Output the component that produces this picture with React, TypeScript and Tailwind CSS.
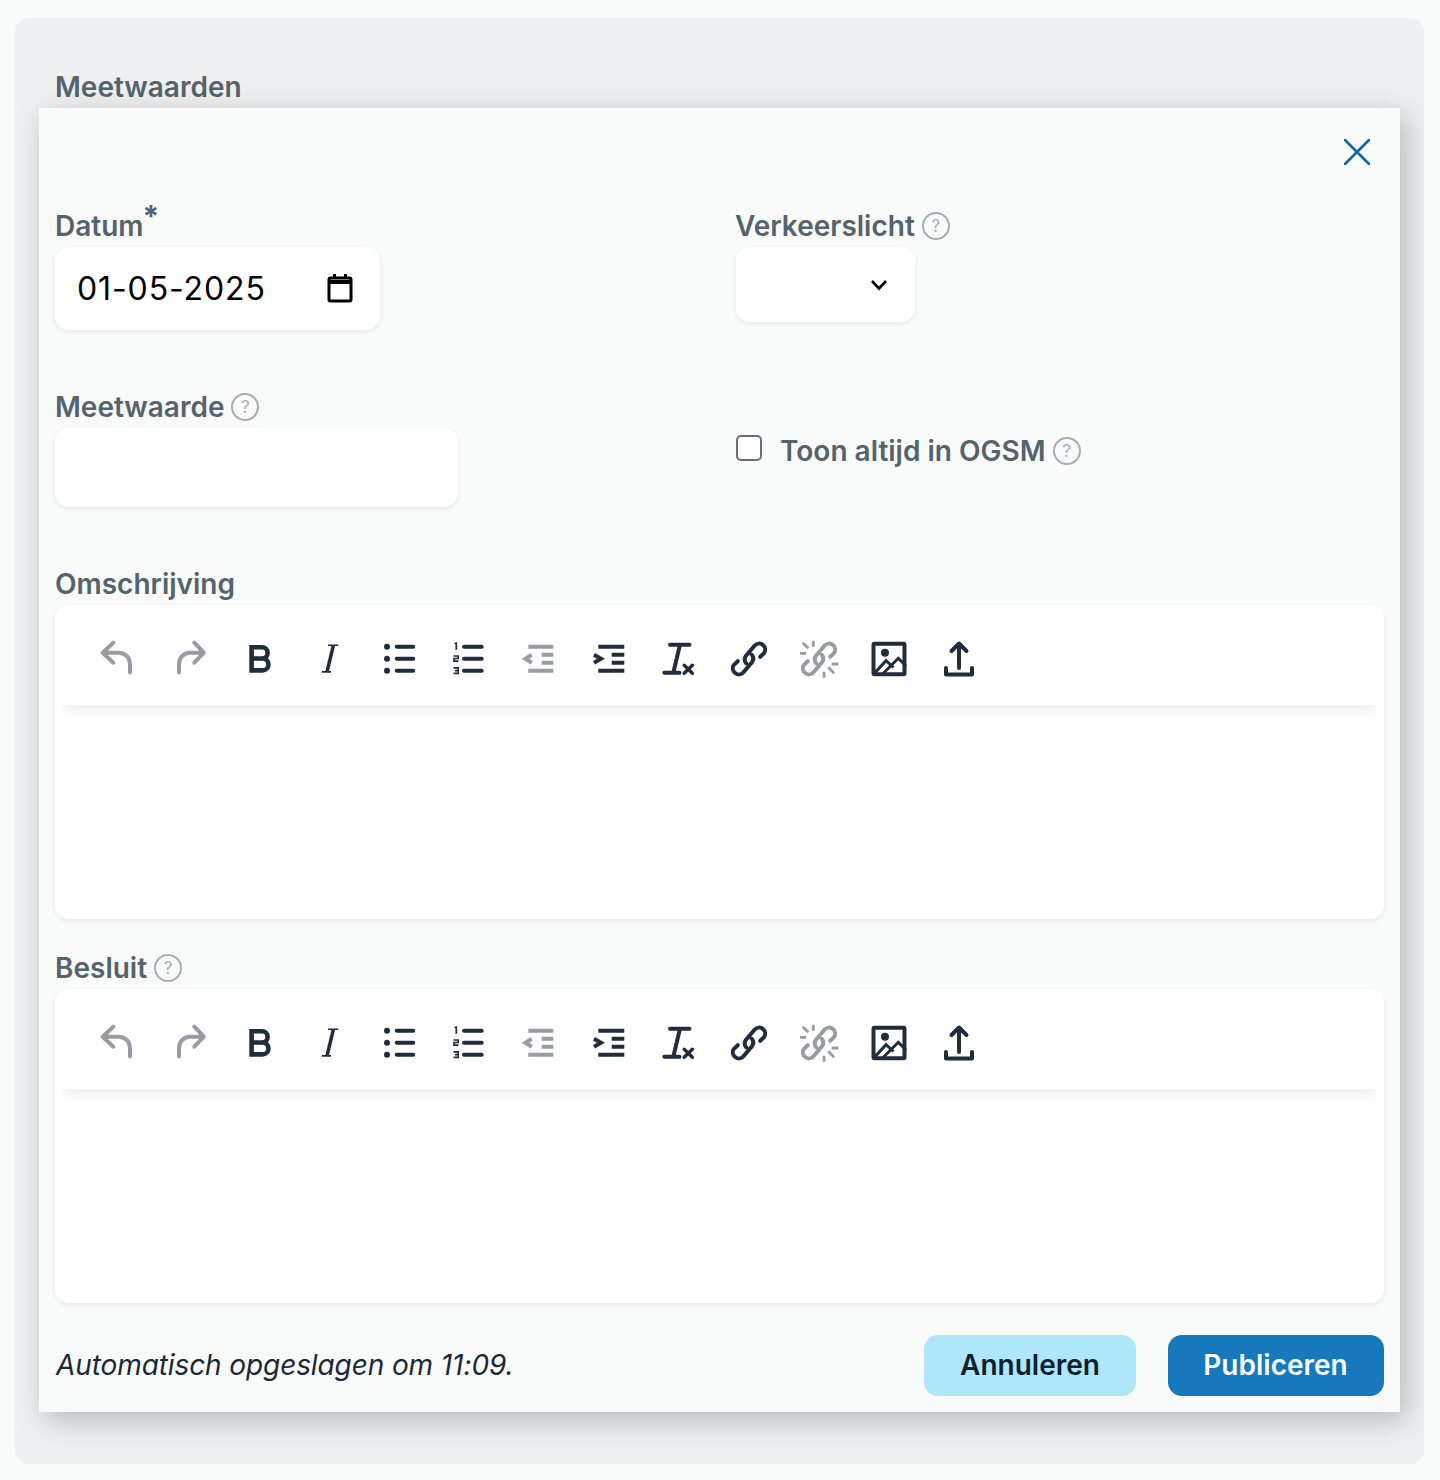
const LINK = 'M-2.8 4.2 C-5 1.5 -4.5 -1.2 -3 -3.2 L5.5 -13.2 A6 6 0 0 1 14.8 -5.6 L11.2 -2.2 M2.8 -4.2 C5 -1.5 4.5 1.2 3 3.2 L-5.5 13.2 A6 6 0 0 1 -14.8 5.6 L-11.2 2.2';

// coordinates are px from the centre of each toolbar button
const TOOLS: { key: string; off?: boolean; draw: React.ReactNode }[] = [
  {
    key: 'undo',
    off: true,
    draw: <path d="M-5.7 -16.3 L-16.3 -6.3 L-5.7 3.7 M-16 -6.3 H-1 C6.5 -6.3 11 -1 11 5 V13.5" />,
  },
  {
    key: 'redo',
    off: true,
    draw: <path d="M5.3 -16.3 L14.8 -6.3 L5.3 3.7 M14 -6.3 H1 C-5.5 -6.3 -10 -1 -10 5 V13.5" />,
  },
  {
    key: 'bold',
    draw: <path strokeWidth="4.6" strokeLinecap="butt" strokeLinejoin="miter" d="M-7.4 -0.5 V-11.7 H3 A5.6 5.6 0 0 1 3 -0.5 H-7.4 V11.4 H3.5 A5.95 5.95 0 0 0 3.5 -0.5" />,
  },
  {
    key: 'italic',
    draw: (
      <>
        <path strokeWidth="1.6" strokeLinecap="butt" d="M-1 -13.8 H9.3 M-7.3 12.9 H2" />
        <path stroke="none" fill="currentColor" d="M2.6 -13.8 H6.2 L-0.2 12.9 H-3.8 Z" />
      </>
    ),
  },
  {
    key: 'ul',
    draw: (
      <>
        <path d="M-2.3 -12.3 H14.3 M-2.3 -0.3 H14.3 M-2.3 11.7 H14.3" />
        <circle cx="-12" cy="-12.3" r="3" fill="currentColor" stroke="none" />
        <circle cx="-12" cy="-0.3" r="3" fill="currentColor" stroke="none" />
        <circle cx="-12" cy="11.7" r="3" fill="currentColor" stroke="none" />
      </>
    ),
  },
  {
    key: 'ol',
    draw: (
      <>
        <path d="M-5 -12.3 H12.7 M-5 -0.3 H12.7 M-5 11.7 H12.7" />
        <path strokeWidth="1.7" strokeLinecap="butt" strokeLinejoin="miter" d="M-14.5 -15.5 L-12.7 -16 V-9.3 M-15.5 -3 H-10.8 V-0.5 H-15 V2.2 H-10.5 M-15.5 8.8 H-10.8 V14.3 H-15.5 M-14 11.6 H-10.8" />
      </>
    ),
  },
  {
    key: 'outdent',
    off: true,
    draw: <path strokeLinecap="butt" strokeLinejoin="miter" d="M-10.7 -12.3 H14.3 M-10.7 11.7 H14.3 M2.7 -4.3 H14.3 M2.7 3.7 H14.3 M-7.3 -4.3 L-13.5 -0.3 L-7.3 3.7" />,
  },
  {
    key: 'indent',
    draw: <path strokeLinecap="butt" strokeLinejoin="miter" d="M-10.7 -12.3 H15.3 M-10.7 11.7 H15.3 M2.7 -4.3 H15.3 M2.7 3.7 H15.3 M-15 -4.3 L-8 -0.3 L-15 3.7" />,
  },
  {
    key: 'clear',
    draw: (
      <>
        <path d="M-9 -14.3 H10.5 M1 -14.3 L-5.7 13.7 M-14.7 13.7 H0.5" />
        <path strokeWidth="3.4" d="M5.2 6.2 L13.4 14.2 M13.4 6.2 L5.2 14.2" />
      </>
    ),
  },
  {
    key: 'link',
    draw: <path d={LINK} />,
  },
  {
    key: 'unlink',
    off: true,
    draw: (
      <>
        <path d={LINK} />
        <path strokeWidth="2.8" strokeLinecap="butt" d="M-16.3 -16.3 L-10.7 -10.7 M-5.7 -18.3 V-12.3 M-19 -5.7 H-13 M19.3 5 H12.7 M9.3 8.3 L15 14.3 M5 12.7 V18.7" />
      </>
    ),
  },
  {
    key: 'image',
    draw: (
      <>
        <rect x="-15.5" y="-15.3" width="31" height="30.5" rx="1" />
        <circle cx="-4" cy="-6.3" r="4" fill="currentColor" stroke="none" />
        <path strokeWidth="3" strokeLinecap="butt" strokeLinejoin="miter" d="M-14 13.7 L-3 1.7 L4.5 8.5 M-5.7 14.3 L9.3 -0.7 L17 7" />
      </>
    ),
  },
  {
    key: 'upload',
    draw: <path d="M-13 9 V15.5 H13 V9 M0 -15 V9 M-7.5 -8 L0 -15.5 L7.5 -8" />,
  },
];

function Help() {
  return (
    <span className="ml-[7px] inline-flex w-[28px] h-[28px] rounded-full border-2 border-[#a3afb5] items-center justify-center text-[17px] leading-none font-normal text-[#a3afb5]">
      ?
    </span>
  );
}

function Label({ children }: { children: React.ReactNode }) {
  return (
    <div className="flex items-center h-[42px] text-[28px] leading-[42px] font-semibold text-[#55636d]">
      {children}
    </div>
  );
}

function Editor() {
  return (
    <div className="h-[314px] rounded-[14px] bg-white shadow-[0_2px_5px_rgba(0,0,0,0.08)]">
      <div className="mx-2 h-[100px] pt-[34px] pl-[21px] flex bg-white shadow-[0_5px_14px_rgba(0,0,0,0.08)] [clip-path:inset(0_0_-24px_0)]">
        {TOOLS.map((t) => (
          <button key={t.key} className={`w-[70px] h-[40px] flex items-center justify-center ${t.off ? 'text-[#989ca3]' : 'text-[#1f2d3d]'}`}>
            <svg width="40" height="40" viewBox="-20 -20 40 40" overflow="visible" fill="none" stroke="currentColor" strokeWidth="4" strokeLinecap="round" strokeLinejoin="round">
              {t.draw}
            </svg>
          </button>
        ))}
      </div>
    </div>
  );
}

export default function App() {
  return (
    <div className="min-h-[1480px] bg-[#f9fbfb] pt-[18px] pl-[15px] font-['Inter',sans-serif]">
      <div className="w-[1409px] h-[1446px] rounded-[14px] bg-[#eff0f2] pt-[48px] px-[24px] overflow-hidden">
        <h2 className="pl-[16px] h-[42px] text-[28px] leading-[42px] font-semibold text-[#55636d]">Meetwaarden</h2>

        <div className="relative bg-[#f9fbfb] px-[16px] pt-[97px] pb-[16px] shadow-[6px_8px_28px_rgba(0,0,0,0.24)]">
          <button className="absolute top-[31px] right-[30px] text-[#15669a]">
            <svg width="26" height="26" viewBox="0 0 26 26" fill="none" stroke="currentColor" strokeWidth="2.6" strokeLinecap="round">
              <path d="M1 1 L25 25 M25 1 L1 25" />
            </svg>
          </button>

          <div className="grid grid-cols-2 gap-x-[33px]">
            <div>
              <Label>
                Datum
                <span className="self-start -mt-[10px] -ml-[1px] text-[30px] leading-[42px] font-bold">*</span>
              </Label>
              <div className="w-[325px] h-[83px] rounded-[14px] bg-white shadow-[0_2px_5px_rgba(0,0,0,0.08)] flex items-center pl-[22px] pr-[27px] justify-between">
                <span className="text-[32px] tracking-[0.9px] text-black">01-05-2025</span>
                <svg width="26" height="30" viewBox="0 0 26 30" fill="none" className="text-black -mt-[2px]">
                  <rect x="2" y="5" width="22" height="23" rx="1.5" stroke="currentColor" strokeWidth="3" />
                  <path d="M2 7 H24 V11 H2 Z M6 1 H9 V6 H6 Z M17 1 H20 V6 H17 Z" fill="currentColor" />
                </svg>
              </div>
            </div>
            <div>
              <div className="-ml-[1px]">
                <Label>
                  Verkeerslicht
                  <Help />
                </Label>
              </div>
              <div className="w-[179px] h-[75px] rounded-[14px] bg-white shadow-[0_2px_5px_rgba(0,0,0,0.08)] flex items-center justify-end pr-[27px]">
                <svg width="18" height="12" viewBox="0 0 18 12" fill="none" stroke="black" strokeWidth="2.6" className="mt-[1px]">
                  <path d="M2 2 L9 9.5 L16 2" />
                </svg>
              </div>
            </div>

            <div className="mt-[56px]">
              <Label>
                Meetwaarde
                <Help />
              </Label>
              <div className="w-[403px] h-[79px] rounded-[14px] bg-white shadow-[0_2px_5px_rgba(0,0,0,0.08)]" />
            </div>
            <div className="mt-[99px] flex items-center self-start h-[42px]">
              <span className="w-[26px] h-[26px] -mt-[4px] rounded-[5px] border-2 border-[#6b6f73] bg-white" />
              <span className="ml-[18px] mt-[2px] flex items-center text-[28px] font-semibold text-[#55636d]">
                Toon altijd in OGSM
                <Help />
              </span>
            </div>
          </div>

          <div className="mt-[56px]">
            <Label>Omschrijving</Label>
            <Editor />
          </div>

          <div className="mt-[28px]">
            <Label>
              Besluit
              <Help />
            </Label>
            <Editor />
          </div>

          <div className="mt-[32px] flex items-center">
            <span className="pl-[1px] pb-[2px] text-[28px] tracking-[-0.1px] italic text-[#1a2838]">Automatisch opgeslagen om 11:09.</span>
            <button className="ml-auto w-[212px] h-[61px] pb-[2px] rounded-[14px] bg-[#b0e6f9] text-[28px] font-semibold text-[#0d1f33]">Annuleren</button>
            <button className="ml-[32px] w-[216px] h-[61px] pb-[2px] pr-[1px] rounded-[14px] bg-[#1679bd] text-[28px] font-semibold text-[#f9fbfb]">Publiceren</button>
          </div>
        </div>
      </div>
    </div>
  );
}
